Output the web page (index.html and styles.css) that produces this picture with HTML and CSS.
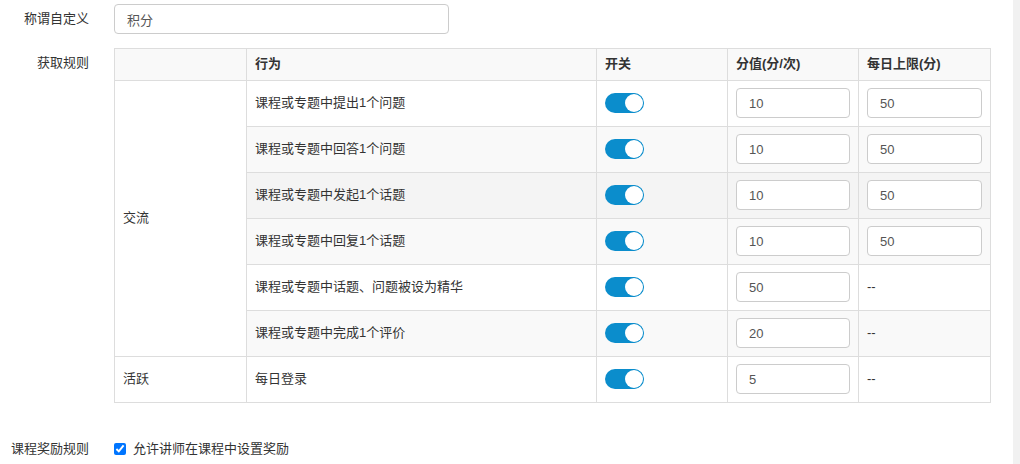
FILE: index.html
```html
<!DOCTYPE html>
<html lang="zh-CN">
<head>
<meta charset="utf-8">
<title>积分设置</title>
<link rel="stylesheet" href="styles.css">
</head>
<body>
<div class="page">
  <div class="main">
    <div class="form-row first">
      <div class="label">称谓自定义</div>
      <div class="field"><input class="text-input name-input" type="text" value="积分"></div>
    </div>
    <div class="form-row">
      <div class="label">获取规则</div>
      <div class="field">
        <table class="rules">
          <colgroup>
            <col class="c1"><col class="c2"><col class="c3"><col class="c4"><col class="c5">
          </colgroup>
          <tbody>
            <tr class="head odd">
              <th></th><th>行为</th><th>开关</th><th>分值(分/次)</th><th>每日上限(分)</th>
            </tr>
            <tr>
              <td rowspan="6" class="group">交流</td>
              <td>课程或专题中提出1个问题</td>
              <td><span class="switch"></span></td>
              <td><input class="text-input" type="text" value="10"></td>
              <td><input class="text-input" type="text" value="50"></td>
            </tr>
            <tr class="odd">
              <td>课程或专题中回答1个问题</td>
              <td><span class="switch"></span></td>
              <td><input class="text-input" type="text" value="10"></td>
              <td><input class="text-input" type="text" value="50"></td>
            </tr>
            <tr class="hover">
              <td>课程或专题中发起1个话题</td>
              <td><span class="switch"></span></td>
              <td><input class="text-input" type="text" value="10"></td>
              <td><input class="text-input" type="text" value="50"></td>
            </tr>
            <tr class="odd">
              <td>课程或专题中回复1个话题</td>
              <td><span class="switch"></span></td>
              <td><input class="text-input" type="text" value="10"></td>
              <td><input class="text-input" type="text" value="50"></td>
            </tr>
            <tr>
              <td>课程或专题中话题、问题被设为精华</td>
              <td><span class="switch"></span></td>
              <td><input class="text-input" type="text" value="50"></td>
              <td>--</td>
            </tr>
            <tr class="odd">
              <td>课程或专题中完成1个评价</td>
              <td><span class="switch"></span></td>
              <td><input class="text-input" type="text" value="20"></td>
              <td>--</td>
            </tr>
            <tr>
              <td class="group">活跃</td>
              <td>每日登录</td>
              <td><span class="switch"></span></td>
              <td><input class="text-input" type="text" value="5"></td>
              <td>--</td>
            </tr>
          </tbody>
        </table>
      </div>
    </div>
    <div class="form-row reward">
      <div class="label">课程奖励规则</div>
      <div class="field">
        <label class="check"><input type="checkbox" checked><span>允许讲师在课程中设置奖励</span></label>
      </div>
    </div>
  </div>
  <div class="scrolltrack"></div>
</div>
</body>
</html>
```

FILE: styles.css
```css
* { box-sizing: border-box; }

html, body {
  margin: 0;
  padding: 0;
  background: #fff;
}

body {
  font-family: "Liberation Sans", "Noto Sans CJK SC", sans-serif;
  font-size: 13px;
  line-height: 20px;
  color: #333;
}

.page {
  display: flex;
  min-height: 464px;
}

.main {
  flex: 1;
  padding-top: 4px;
}

.scrolltrack {
  width: 7px;
  background: #f1f1f1;
}

.form-row {
  display: grid;
  grid-template-columns: 89px 1fr;
  column-gap: 25px;
  margin-top: 14px;
}

.form-row.first {
  margin-top: 0;
}

.form-row.reward {
  margin-top: 36px;
}

.label {
  text-align: right;
  padding-top: 5px;
  white-space: nowrap;
}

.reward .label {
  padding-top: 0;
}

.text-input {
  display: block;
  width: 100%;
  height: 30px;
  padding: 0 12px;
  border: 1px solid #ccc;
  border-radius: 4px;
  font-family: inherit;
  font-size: 13px;
  color: #555;
  background: #fff;
  outline: none;
}

.name-input {
  width: 335px;
}

.rules {
  width: 876px;
  border-collapse: collapse;
  table-layout: fixed;
}

.rules col.c1 { width: 132px; }
.rules col.c2 { width: 350px; }
.rules col.c3 { width: 131px; }
.rules col.c4 { width: 131px; }
.rules col.c5 { width: 132px; }

.rules th,
.rules td {
  border: 1px solid #ddd;
  text-align: left;
  vertical-align: middle;
}

.rules th {
  padding: 5px 8px 6px;
  font-weight: bold;
  height: 32px;
}

.rules td {
  padding: 7px 8px 8px;
  height: 46px;
}

.rules tr.odd { background: #f9f9f9; }
.rules tr.hover { background: #f4f4f4; }
.rules tr .group { background: #fff; }

.switch {
  display: block;
  position: relative;
  width: 39px;
  height: 20px;
  border-radius: 10px;
  background: #0b8dcc;
}

.switch::after {
  content: "";
  position: absolute;
  top: 1px;
  right: 1px;
  width: 18px;
  height: 18px;
  border-radius: 50%;
  background: #fff;
  box-shadow: 0 0 0 0.5px #0b8dcc;
}

.check {
  display: flex;
  align-items: center;
  gap: 7px;
}

.check input {
  margin: 0;
  width: 12px;
  height: 12px;
  accent-color: #0075ff;
}
```
